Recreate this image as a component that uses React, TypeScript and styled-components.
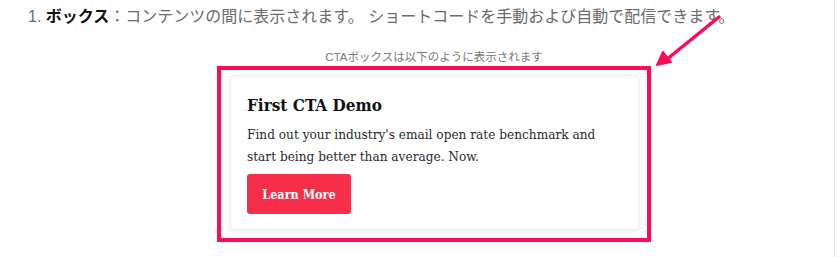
import styled, { createGlobalStyle } from 'styled-components';

const GlobalStyle = createGlobalStyle`
  html, body {
    margin: 0;
    padding: 0;
    background: #ffffff;
  }
`;

const Page = styled.div`
  position: relative;
  box-sizing: border-box;
  width: 835px;
  height: 257px;
  padding: 5px 0 0 28px;
  border-right: 1px solid #e6e6e6;
  overflow: hidden;
`;

const Intro = styled.p`
  margin: 0;
  font-family: 'Liberation Sans', 'Noto Sans CJK JP', sans-serif;
  font-size: 16px;
  line-height: 24px;
  color: #6a6a6a;
  white-space: nowrap;

  strong {
    color: #111111;
    font-weight: 700;
  }
`;

const Figure = styled.div`
  width: 434px;
  margin: 20px 0 0 189px;
`;

const Caption = styled.div`
  font-family: 'Liberation Sans', 'Noto Sans CJK JP', sans-serif;
  font-size: 11.5px;
  line-height: 16px;
  color: #777777;
  text-align: center;
  margin-bottom: 1px;
`;

const Frame = styled.div`
  box-sizing: border-box;
  border: 4px solid #fe0a55;
  padding: 5px 8px 8px 9px;
`;

const Card = styled.div`
  box-sizing: border-box;
  height: 155px;
  padding: 17px 16px 16px;
  background: #ffffff;
  border-radius: 4px;
  border: 1px solid #f0f0f0;
  box-shadow: 0 2px 5px rgba(0, 0, 0, 0.08);
`;

const Title = styled.h3`
  margin: 0;
  font-family: 'DejaVu Serif Condensed', 'DejaVu Serif', serif;
  font-size: 17px;
  line-height: 24px;
  font-weight: 700;
  color: #111111;
`;

const Body = styled.p`
  margin: 6px 0 0;
  font-family: 'DejaVu Serif Condensed', 'DejaVu Serif', serif;
  font-size: 13.5px;
  line-height: 22px;
  color: #2a2a2a;
`;

const Button = styled.button`
  display: flex;
  align-items: center;
  justify-content: center;
  width: 104px;
  height: 40px;
  margin-top: 7px;
  padding: 0;
  border: none;
  border-radius: 3px;
  background: #f72e49;
  color: #ffffff;
  font-family: 'DejaVu Serif Condensed', 'DejaVu Serif', serif;
  font-size: 12.5px;
  font-weight: 700;
  cursor: pointer;
`;

const Arrow = styled.svg`
  position: absolute;
  left: 650px;
  top: 8px;
  pointer-events: none;
`;

export default function App() {
  return (
    <>
      <GlobalStyle />
      <Page>
        <Intro>
          1. <strong>ボックス</strong>：コンテンツの間に表示されます。 ショートコードを手動および自動で配信できます。
        </Intro>
        <Figure>
          <Caption>CTAボックスは以下のように表示されます</Caption>
          <Frame>
            <Card>
              <Title>First CTA Demo</Title>
              <Body>
                Find out your industry's email open rate benchmark and
                <br />
                start being better than average. Now.
              </Body>
              <Button>Learn More</Button>
            </Card>
          </Frame>
        </Figure>
        <Arrow width="80" height="70" viewBox="0 0 80 70">
          <line x1="69" y1="9" x2="16" y2="52" stroke="#fe0a55" strokeWidth="3.5" strokeLinecap="round" />
          <polygon points="7,57 13,44 21,54" fill="#fe0a55" stroke="#fe0a55" strokeWidth="2" strokeLinejoin="round" />
        </Arrow>
      </Page>
    </>
  );
}
